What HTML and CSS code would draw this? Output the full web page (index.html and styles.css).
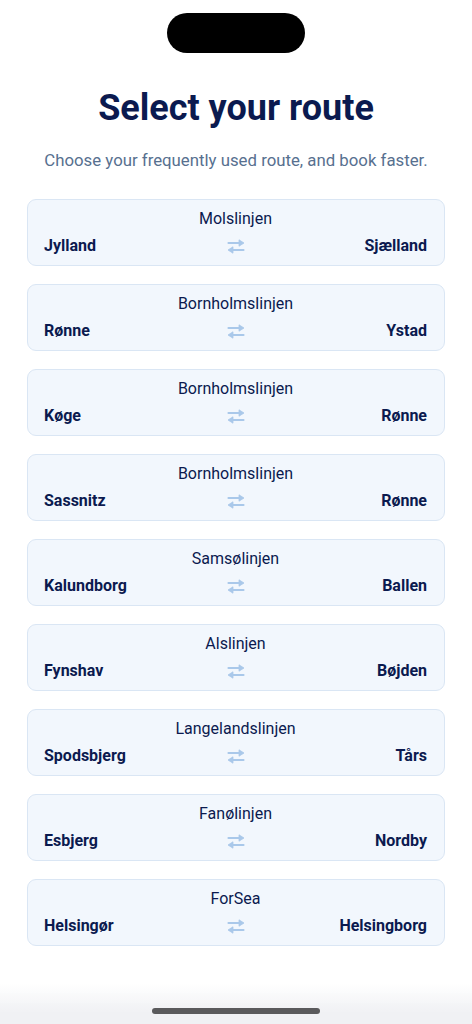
FILE: index.html
```html
<!DOCTYPE html>
<html lang="en">
<head>
<meta charset="utf-8">
<link rel="stylesheet" href="styles.css">
</head>
<body>
<div class="screen">
  <div class="island"></div>
  <h1 class="title">Select your route</h1>
  <p class="subtitle">Choose your frequently used route, and book faster.</p>
  <div class="routes">
    <div class="card"><div class="name">Molslinjen</div><div class="row"><span class="end">Jylland</span><svg class="swap" viewBox="0 0 18 15"><path class="ln" d="M1.5 4h11M16.5 11h-11"/><path class="hd" d="M12 0.8L17 4L12 7.2Z M6 7.8L1 11L6 14.2Z"/></svg><span class="end">Sjælland</span></div></div>
    <div class="card"><div class="name">Bornholmslinjen</div><div class="row"><span class="end">Rønne</span><svg class="swap" viewBox="0 0 18 15"><path class="ln" d="M1.5 4h11M16.5 11h-11"/><path class="hd" d="M12 0.8L17 4L12 7.2Z M6 7.8L1 11L6 14.2Z"/></svg><span class="end">Ystad</span></div></div>
    <div class="card"><div class="name">Bornholmslinjen</div><div class="row"><span class="end">Køge</span><svg class="swap" viewBox="0 0 18 15"><path class="ln" d="M1.5 4h11M16.5 11h-11"/><path class="hd" d="M12 0.8L17 4L12 7.2Z M6 7.8L1 11L6 14.2Z"/></svg><span class="end">Rønne</span></div></div>
    <div class="card"><div class="name">Bornholmslinjen</div><div class="row"><span class="end">Sassnitz</span><svg class="swap" viewBox="0 0 18 15"><path class="ln" d="M1.5 4h11M16.5 11h-11"/><path class="hd" d="M12 0.8L17 4L12 7.2Z M6 7.8L1 11L6 14.2Z"/></svg><span class="end">Rønne</span></div></div>
    <div class="card"><div class="name">Samsølinjen</div><div class="row"><span class="end">Kalundborg</span><svg class="swap" viewBox="0 0 18 15"><path class="ln" d="M1.5 4h11M16.5 11h-11"/><path class="hd" d="M12 0.8L17 4L12 7.2Z M6 7.8L1 11L6 14.2Z"/></svg><span class="end">Ballen</span></div></div>
    <div class="card"><div class="name">Alslinjen</div><div class="row"><span class="end">Fynshav</span><svg class="swap" viewBox="0 0 18 15"><path class="ln" d="M1.5 4h11M16.5 11h-11"/><path class="hd" d="M12 0.8L17 4L12 7.2Z M6 7.8L1 11L6 14.2Z"/></svg><span class="end">Bøjden</span></div></div>
    <div class="card"><div class="name">Langelandslinjen</div><div class="row"><span class="end">Spodsbjerg</span><svg class="swap" viewBox="0 0 18 15"><path class="ln" d="M1.5 4h11M16.5 11h-11"/><path class="hd" d="M12 0.8L17 4L12 7.2Z M6 7.8L1 11L6 14.2Z"/></svg><span class="end">Tårs</span></div></div>
    <div class="card"><div class="name">Fanølinjen</div><div class="row"><span class="end">Esbjerg</span><svg class="swap" viewBox="0 0 18 15"><path class="ln" d="M1.5 4h11M16.5 11h-11"/><path class="hd" d="M12 0.8L17 4L12 7.2Z M6 7.8L1 11L6 14.2Z"/></svg><span class="end">Nordby</span></div></div>
    <div class="card"><div class="name">ForSea</div><div class="row"><span class="end">Helsingør</span><svg class="swap" viewBox="0 0 18 15"><path class="ln" d="M1.5 4h11M16.5 11h-11"/><path class="hd" d="M12 0.8L17 4L12 7.2Z M6 7.8L1 11L6 14.2Z"/></svg><span class="end">Helsingborg</span></div></div>
  </div>
  <div class="home-area"><div class="home-bar"></div></div>
</div>
</body>
</html>
```
FILE: styles.css
```css
* { box-sizing: border-box; }
html, body { margin: 0; padding: 0; background: #ffffff; }
body { font-family: Roboto, "Noto Sans", sans-serif; color: #0b1a4f; }
.screen { width: 472px; height: 1024px; overflow: hidden; display: flex; flex-direction: column; align-items: center; }
.island { width: 138px; height: 40px; border-radius: 20px; background: #000; margin-top: 13px; flex-shrink: 0; }
.title { margin: 33px 0 0; font-size: 36px; line-height: 44px; font-weight: 700; color: #0b1a4f; text-align: center; }
.subtitle { margin: 18px 0 0; font-size: 16.8px; line-height: 24px; color: #57708f; text-align: center; }
.routes { margin-top: 27px; width: 418px; display: flex; flex-direction: column; gap: 18px; }
.card { height: 67px; background: #f2f7fd; border: 1px solid #dae6f4; border-radius: 9px; padding: 9px 17px 9px 16px; display: flex; flex-direction: column; gap: 7px; }
.name { font-size: 16px; line-height: 20px; text-align: center; color: #0b1a4f; }
.row { display: grid; grid-template-columns: 1fr auto 1fr; align-items: center; height: 20px; }
.end { font-size: 16px; line-height: 20px; font-weight: 700; color: #0b1a4f; }
.end:last-child { text-align: right; }
.swap { width: 18px; height: 15px; }
.swap .ln { fill: none; stroke: #a9c8ea; stroke-width: 2.2; stroke-linecap: round; }
.swap .hd { fill: #a9c8ea; stroke: #a9c8ea; stroke-width: 0.8; stroke-linejoin: round; }
.home-area { position: fixed; left: 0; right: 0; bottom: 0; height: 40px; background: linear-gradient(to bottom, rgba(242,243,246,0), #f0f1f4 70%); display: flex; justify-content: center; align-items: flex-end; padding-bottom: 10px; }
.home-bar { width: 168px; height: 6px; border-radius: 3px; background: #5a5a5c; }
```
